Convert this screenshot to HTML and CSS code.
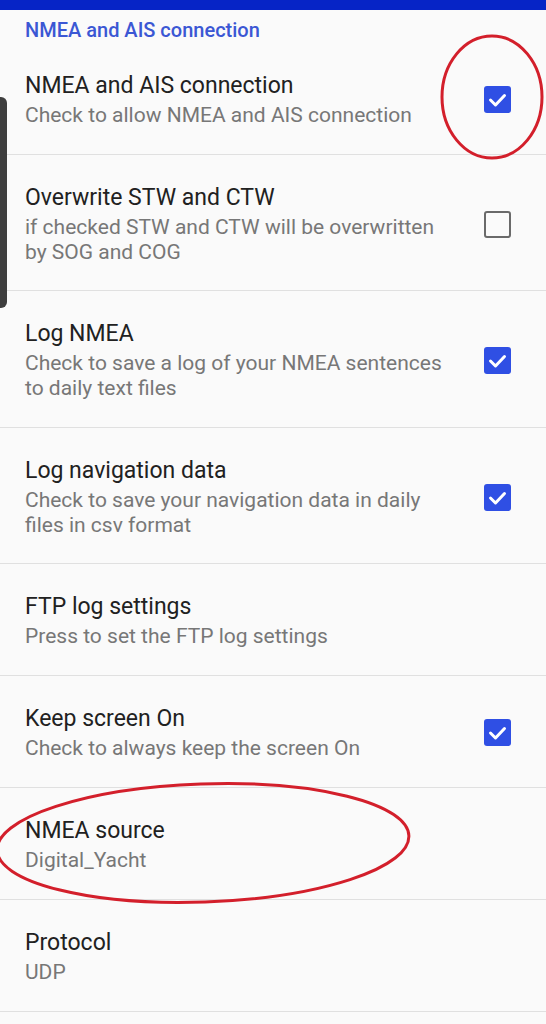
FILE: index.html
```html
<!DOCTYPE html>
<html>
<head>
<meta charset="utf-8">
<link rel="stylesheet" href="styles.css">
</head>
<body>
<div class="screen">
  <div class="statusbar"></div>
  <div class="category">NMEA and AIS connection</div>

  <div class="pref">
    <div class="text">
      <div class="title">NMEA and AIS connection</div>
      <div class="summary">Check to allow NMEA and AIS connection</div>
    </div>
    <div class="widget"><span class="cb on"><svg viewBox="0 0 27 27"><path d="M6.5 14 L11.5 19 L20.5 9.5"/></svg></span></div>
  </div>

  <div class="pref two">
    <div class="text">
      <div class="title">Overwrite STW and CTW</div>
      <div class="summary">if checked STW and CTW will be overwritten by SOG and COG</div>
    </div>
    <div class="widget"><span class="cb off"></span></div>
  </div>

  <div class="pref">
    <div class="text">
      <div class="title">Log NMEA</div>
      <div class="summary">Check to save a log of your NMEA sentences to daily text files</div>
    </div>
    <div class="widget"><span class="cb on"><svg viewBox="0 0 27 27"><path d="M6.5 14 L11.5 19 L20.5 9.5"/></svg></span></div>
  </div>

  <div class="pref two">
    <div class="text">
      <div class="title">Log navigation data</div>
      <div class="summary">Check to save your navigation data in daily files in csv format</div>
    </div>
    <div class="widget"><span class="cb on"><svg viewBox="0 0 27 27"><path d="M6.5 14 L11.5 19 L20.5 9.5"/></svg></span></div>
  </div>

  <div class="pref">
    <div class="text">
      <div class="title">FTP log settings</div>
      <div class="summary">Press to set the FTP log settings</div>
    </div>
  </div>

  <div class="pref">
    <div class="text">
      <div class="title">Keep screen On</div>
      <div class="summary">Check to always keep the screen On</div>
    </div>
    <div class="widget"><span class="cb on"><svg viewBox="0 0 27 27"><path d="M6.5 14 L11.5 19 L20.5 9.5"/></svg></span></div>
  </div>

  <div class="pref">
    <div class="text">
      <div class="title">NMEA source</div>
      <div class="summary">Digital_Yacht</div>
    </div>
  </div>

  <div class="pref">
    <div class="text">
      <div class="title">Protocol</div>
      <div class="summary">UDP</div>
    </div>
  </div>

  <div class="handle"></div>
  <svg class="marks" viewBox="0 0 546 1024" width="546" height="1024">
    <ellipse cx="492" cy="97" rx="50" ry="61"/>
    <ellipse cx="203" cy="843" rx="206" ry="59" transform="rotate(-2 203 843)"/>
  </svg>
</div>
</body>
</html>
```
FILE: styles.css
```css
html, body {
  margin: 0;
  padding: 0;
  background: #fafafa;
}
.screen {
  position: relative;
  width: 546px;
  height: 1024px;
  overflow: hidden;
  background: #fafafa;
  font-family: Roboto, "Noto Sans", sans-serif;
}
.statusbar {
  height: 10px;
  background: #0624c6;
}
.category {
  height: 33px;
  box-sizing: border-box;
  padding: 8px 0 0 25px;
  font-size: 20px;
  line-height: 24px;
  font-weight: 500;
  color: #3b57d4;
}
.pref {
  display: flex;
  align-items: center;
  padding: 28px 0 26px 25px;
  border-bottom: 1px solid #e0e0e0;
}
.pref.two {
  padding-bottom: 25px;
}
.text {
  flex: 1;
  min-width: 0;
  padding-right: 34px;
}
.title {
  font-size: 23px;
  line-height: 30px;
  color: #212121;
}
.summary {
  margin-top: 2px;
  font-size: 21px;
  line-height: 25px;
  color: #777777;
}
.widget {
  width: 27px;
  margin-right: 35px;
  display: flex;
  align-items: center;
}
.cb {
  display: block;
  width: 27px;
  height: 27px;
  box-sizing: border-box;
  border-radius: 3px;
}
.cb.on {
  background: #2f4fe4;
}
.cb.on svg {
  display: block;
  width: 27px;
  height: 27px;
}
.cb.on path {
  fill: none;
  stroke: #ffffff;
  stroke-width: 3;
  stroke-linecap: round;
  stroke-linejoin: round;
}
.cb.off {
  border: 2.5px solid #6a6a6a;
}
.handle {
  position: absolute;
  left: 0;
  top: 97px;
  width: 7px;
  height: 211px;
  background: #3e3e3e;
  border-radius: 0 6px 6px 0;
}
.marks {
  position: absolute;
  left: 0;
  top: 0;
  pointer-events: none;
}
.marks ellipse {
  fill: none;
  stroke: #d31f2b;
  stroke-width: 3;
}
```
